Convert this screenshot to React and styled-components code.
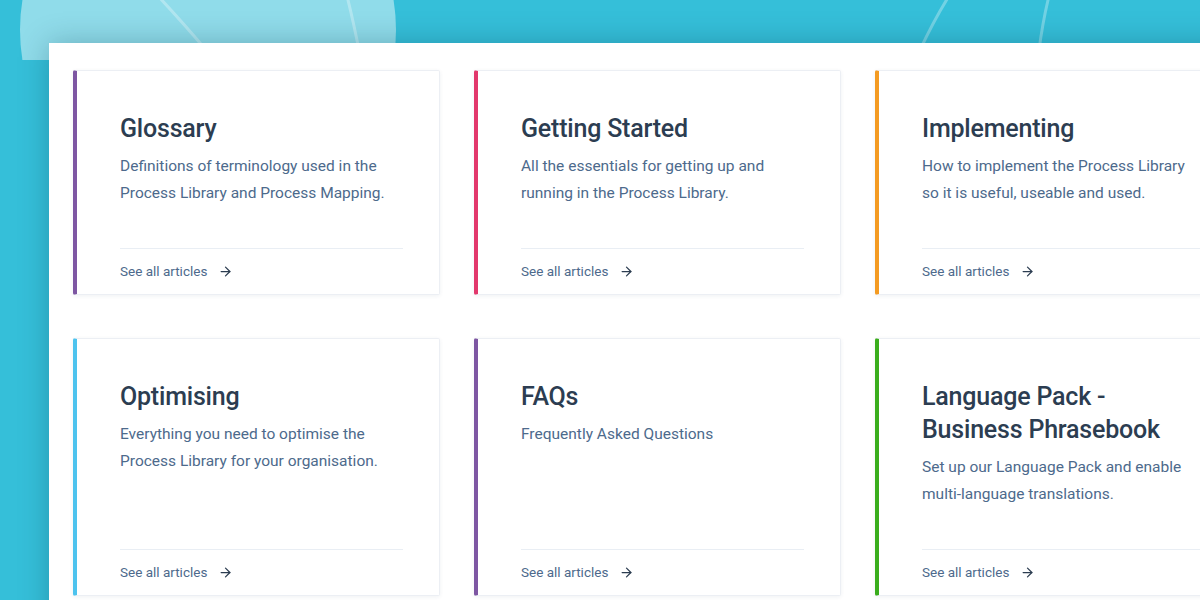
import React from "react";
import styled, { createGlobalStyle } from "styled-components";
import { ArrowRight } from "lucide-react";

const GlobalStyle = createGlobalStyle`
  html, body {
    margin: 0;
    padding: 0;
    height: 100%;
    overflow: hidden;
  }
  body {
    background: #35bfd9;
    font-family: Roboto, "Liberation Sans", Arial, sans-serif;
  }
`;

const Page = styled.div`
  position: relative;
  width: 1200px;
  height: 600px;
  overflow: hidden;
  padding: 43px 0 0 49px;
  box-sizing: border-box;
`;

const Decor = styled.svg`
  position: absolute;
  top: 0;
  left: 0;
  z-index: 0;
`;

const Panel = styled.main`
  position: relative;
  z-index: 1;
  width: 1300px;
  min-height: 600px;
  background: #fff;
  padding: 27px 0 0 24px;
  box-sizing: border-box;
  box-shadow: 0 0 28px rgba(0, 50, 70, 0.28);
`;

const Grid = styled.div`
  display: grid;
  grid-template-columns: repeat(3, 367px);
  column-gap: 34px;
  row-gap: 43px;
`;

const Card = styled.article`
  display: flex;
  flex-direction: column;
  background: #fff;
  border: 1px solid #eceff4;
  border-left: 4px solid ${({ $accent }) => $accent};
  border-radius: 2px;
  box-shadow: 0 1px 4px rgba(30, 50, 80, 0.07);
  padding: 41px 36px 13px 43px;
`;

const Title = styled.h2`
  margin: 0 0 8px;
  font-size: 25px;
  line-height: 33px;
  font-weight: 500;
  letter-spacing: -0.2px;
  color: #2c3d51;
`;

const Description = styled.p`
  margin: 0;
  font-size: 15.5px;
  line-height: 27px;
  color: #4d6a8c;
`;

const Footer = styled.div`
  margin-top: auto;
  padding-top: 41px;
`;

const Divider = styled.hr`
  margin: 0;
  border: 0;
  border-top: 1px solid #e9eef4;
`;

const Link = styled.a`
  display: flex;
  align-items: center;
  gap: 11px;
  padding-top: 12px;
  font-size: 13.5px;
  line-height: 20px;
  color: #4d6a8c;
  text-decoration: none;

  svg {
    color: #2c3d51;
  }
`;

const categories = [
  {
    title: "Glossary",
    text: "Definitions of terminology used in the Process Library and Process Mapping.",
    accent: "#7d56a2",
  },
  {
    title: "Getting Started",
    text: "All the essentials for getting up and running in the Process Library.",
    accent: "#e2386c",
  },
  {
    title: "Implementing",
    text: "How to implement the Process Library so it is useful, useable and used.",
    accent: "#f49b22",
  },
  {
    title: "Optimising",
    text: "Everything you need to optimise the Process Library for your organisation.",
    accent: "#4dc3ee",
  },
  {
    title: "FAQs",
    text: "Frequently Asked Questions",
    accent: "#7d56a2",
  },
  {
    title: "Language Pack - Business Phrasebook",
    text: "Set up our Language Pack and enable multi-language translations.",
    accent: "#3aad1c",
  },
];

export default function App() {
  return (
    <>
      <GlobalStyle />
      <Page>
        <Decor width="1200" height="60" viewBox="0 0 1200 60">
          <circle cx="208" cy="30" r="188" fill="rgba(255,255,255,0.45)" />
          <path d="M158 -4 Q185 25 206 50" stroke="rgba(255,255,255,0.3)" strokeWidth="3" fill="none" />
          <path d="M347 -4 Q353 20 359 50" stroke="rgba(255,255,255,0.3)" strokeWidth="3" fill="none" />
          <path d="M949 -4 Q934 20 920 50" stroke="rgba(255,255,255,0.3)" strokeWidth="3" fill="none" />
          <path d="M1049 -4 Q1043 20 1039 50" stroke="rgba(255,255,255,0.3)" strokeWidth="3" fill="none" />
        </Decor>
        <Panel>
          <Grid>
            {categories.map((c) => (
              <Card key={c.title} $accent={c.accent}>
                <Title>{c.title}</Title>
                <Description>{c.text}</Description>
                <Footer>
                  <Divider />
                  <Link href="#">
                    See all articles
                    <ArrowRight size={15} strokeWidth={2} />
                  </Link>
                </Footer>
              </Card>
            ))}
          </Grid>
        </Panel>
      </Page>
    </>
  );
}
